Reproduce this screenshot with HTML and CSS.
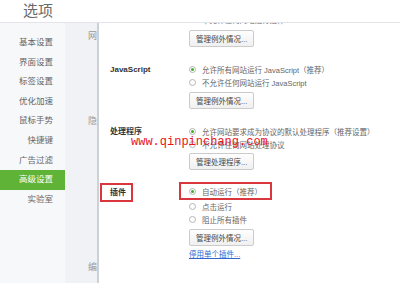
FILE: index.html
```html
<!DOCTYPE html>
<html lang="zh-CN">
<head>
  <meta charset="UTF-8">
  <title>选项</title>
  <link rel="stylesheet" href="styles.css">
</head>
<body>
  <div class="window">
    <header class="title-bar">
      <h1>选项</h1>
    </header>

    <div class="main">
      <!-- left menu -->
      <ul class="nav">
        <li>基本设置</li>
        <li>界面设置</li>
        <li>标签设置</li>
        <li>优化加速</li>
        <li>鼠标手势</li>
        <li>快捷键</li>
        <li>广告过滤</li>
        <li class="active">高级设置</li>
        <li>实验室</li>
      </ul>

      <!-- group headings, clipped by the border -->
      <div class="groups">
        <span class="group g1">网络内容</span>
        <span class="group g2">隐私设置</span>
        <span class="group g3">编码</span>
      </div>

      <div class="content">
        <div class="section first">
          <div class="label"></div>
          <div class="options">
            <div class="radio"><span class="mark"></span>不允许任何网站运行插件</div>
            <button class="btn">管理例外情况...</button>
          </div>
        </div>

        <div class="section js">
          <div class="label">JavaScript</div>
          <div class="options">
            <div class="radio"><span class="mark checked"></span>允许所有网站运行 JavaScript（推荐）</div>
            <div class="radio"><span class="mark"></span>不允许任何网站运行 JavaScript</div>
            <button class="btn">管理例外情况...</button>
          </div>
        </div>

        <div class="section handlers">
          <div class="label">处理程序</div>
          <div class="options">
            <div class="radio"><span class="mark checked"></span>允许网站要求成为协议的默认处理程序（推荐设置）</div>
            <div class="radio"><span class="mark"></span>不允许任何网站处理协议</div>
            <button class="btn btn-tight">管理处理程序...</button>
          </div>
        </div>

        <div class="section plugins">
          <div class="label"><span class="boxed">插件</span></div>
          <div class="options">
            <div class="radio boxed-row"><span class="mark checked"></span>自动运行（推荐）</div>
            <div class="radio"><span class="mark"></span>点击运行</div>
            <div class="radio"><span class="mark"></span>阻止所有插件</div>
            <button class="btn btn-low">管理例外情况...</button>
            <a class="link" href="#">停用单个插件...</a>
          </div>
        </div>
      </div>
    </div>

    <div class="watermark">www.qinpinchang.com</div>
  </div>
</body>
</html>
```

FILE: styles.css
```css
body {
  margin: 0;
  background: #fff;
  font-family: "Liberation Sans", "Noto Sans CJK SC", sans-serif;
}

.window {
  position: relative;
  width: 400px;
  height: 283px;
  overflow: hidden;
}

.title-bar {
  height: 22px;
  border-bottom: 1px solid #e2e4e7;
  background: #fff;
  position: relative;
  z-index: 2;
}

.title-bar h1 {
  margin: 0;
  padding-left: 23px;
  font-size: 15px;
  font-weight: normal;
  line-height: 20px;
  color: #6a6a6a;
  font-family: "Noto Sans CJK SC", sans-serif;
}

.main {
  display: flex;
  height: 260px;
  overflow: hidden;
}

/* menu */
.nav {
  list-style: none;
  margin: 0;
  padding: 10px 0 0;
  width: 65px;
  background: #f7f8fa;
}

.nav li {
  height: 19.6px;
  line-height: 19.6px;
  padding-right: 12px;
  text-align: right;
  font-size: 8.5px;
  color: #666;
}

.nav li.active {
  background: #5fb437;
  color: #fff;
}

.groups {
  width: 32px;
  background: #f0f2f5;
  border-right: 2px solid #cdd0d4;
  overflow: hidden;
  display: flex;
  flex-direction: column;
}

.group {
  display: block;
  padding-left: 23px;
  white-space: nowrap;
  font-size: 9px;
  line-height: 12px;
  color: #999;
}

.g1 { margin-top: 7px; }
.g2 { margin-top: 73px; }
.g3 { margin-top: 134px; }

/* settings */
.content {
  flex: 1;
  padding-left: 11px;
}

.section {
  display: grid;
  grid-template-columns: 79px 1fr;
}

.section.first { margin-top: -10px; }
.section.js { margin-top: 16px; }
.section.handlers { margin-top: 16px; }
.section.plugins { margin-top: 12px; }

.label {
  font-size: 8px;
  font-weight: bold;
  line-height: 13px;
  color: #333;
}

.options {
  display: flex;
  flex-direction: column;
  align-items: flex-start;
}

.radio {
  display: flex;
  align-items: center;
  height: 13px;
  font-size: 7.5px;
  color: #666;
  white-space: nowrap;
}

.mark {
  width: 7px;
  height: 7px;
  border: 1px solid #b5b5b5;
  border-radius: 50%;
  box-sizing: border-box;
  background: #fff;
  margin-right: 6px;
  position: relative;
}

.mark.checked::after {
  content: "";
  position: absolute;
  left: 1px;
  top: 1px;
  width: 3px;
  height: 3px;
  border-radius: 50%;
  background: #3fae2a;
}

.btn {
  margin-top: 4px;
  height: 17px;
  padding: 0 6px;
  border: 1px solid #cbcbcb;
  border-radius: 2px;
  background: linear-gradient(#fefefe, #f0f0f0);
  font-family: inherit;
  font-size: 7.5px;
  color: #444;
}

.js .btn { margin-top: 3px; }
.btn-tight { margin-top: 2px; }
.btn-low { margin-top: 3px; }

.link {
  margin-top: 2px;
  line-height: 13px;
  font-size: 7.5px;
  color: #3366cc;
}

/* red highlight boxes */
.boxed {
  display: inline-block;
  margin: 1px 0 0 -10px;
  padding: 1px 5px 1px 8px;
  border: 2px solid #d9363e;
}

.boxed-row {
  width: 81px;
  margin-left: -10px;
  padding: 1px 0 0 8px;
  border: 2px solid #d9363e;
  box-sizing: content-box;
}

.watermark {
  position: absolute;
  left: 131px;
  top: 134px;
  font-family: "Liberation Mono", monospace;
  font-size: 12px;
  line-height: 16px;
  color: #e8141b;
  z-index: 3;
}
```
